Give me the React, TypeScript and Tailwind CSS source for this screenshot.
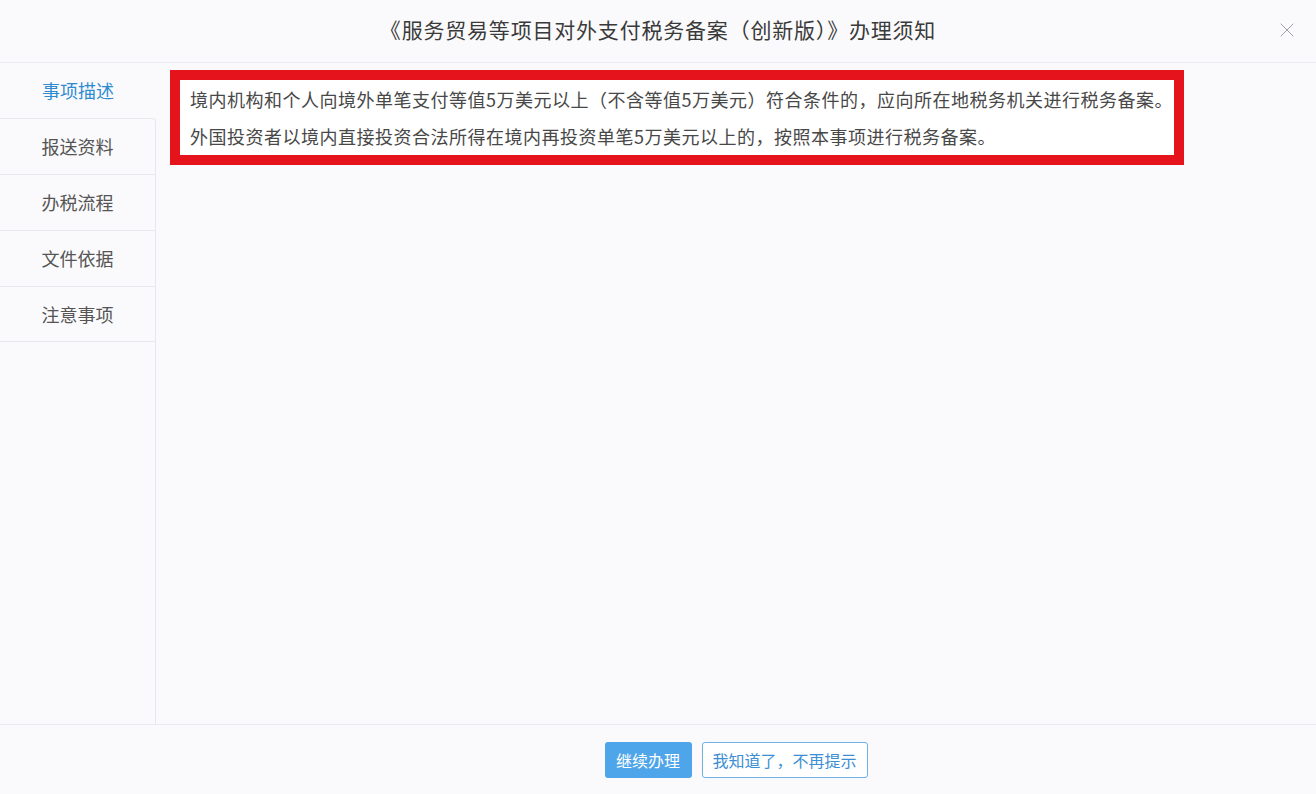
import { X } from "lucide-react";

const font = { fontFamily: '"Noto Sans CJK SC", "Noto Sans", sans-serif' };

const App = () => {
  const tabs = ["报送资料", "办税流程", "文件依据", "注意事项"];

  return (
    <div
      className="h-[794px] w-full flex flex-col bg-[#fafafc] text-[#444]"
      style={font}
    >
      <header className="h-[63px] shrink-0 border-b border-[#ebebef] flex items-center justify-center relative">
        <h1 className="text-[21px] text-[#3a3a3a] tracking-[0.8px] -mt-[2px]">
          《服务贸易等项目对外支付税务备案（创新版）》办理须知
        </h1>
        <button className="absolute right-[17px] top-[18px] text-[#a0a0a6]">
          <X size={24} strokeWidth={1} />
        </button>
      </header>

      <div className="flex flex-1 min-h-0">
        <nav className="w-[156px] shrink-0 flex flex-col">
          <div className="h-[55px] flex items-center justify-center text-[18px] text-[#2e8bd0]">
            事项描述
          </div>
          {tabs.map((t, i) => (
            <div
              key={t}
              className={`h-14 flex items-center justify-center text-[18px] text-[#555] border-t border-r border-[#e8e8ec] ${
                i === 0 ? "rounded-tr-[4px]" : ""
              } ${i === tabs.length - 1 ? "border-b" : ""}`}
            >
              {t}
            </div>
          ))}
          <div className="flex-1 border-r border-[#e8e8ec]" />
        </nav>

        <main className="flex-1 pl-[14px] pt-[7px]">
          <div className="w-[1014px] border-[10px] border-[#e5141c]">
            <div className="bg-white pl-[10px] pt-[1px] text-[18px] leading-[37px] tracking-[0.5px] text-[#484848]">
              <p>
                境内机构和个人向境外单笔支付等值5万美元以上（不含等值5万美元）符合条件的，应向所在地税务机关进行税务备案。
              </p>
              <p>
                外国投资者以境内直接投资合法所得在境内再投资单笔5万美元以上的，按照本事项进行税务备案。
              </p>
            </div>
          </div>
        </main>
      </div>

      <footer className="h-[70px] shrink-0 border-t border-[#ebebef] flex items-center justify-center gap-[10px] pl-[156px]">
        <button className="h-[36px] w-[87px] rounded-[3px] bg-[#4fa5ea] text-white text-[16px]">
          继续办理
        </button>
        <button className="h-[36px] w-[166px] rounded-[3px] border border-[#70b0e2] bg-white text-[#3d8fd5] text-[16px]">
          我知道了，不再提示
        </button>
      </footer>
    </div>
  );
};

export default App;
